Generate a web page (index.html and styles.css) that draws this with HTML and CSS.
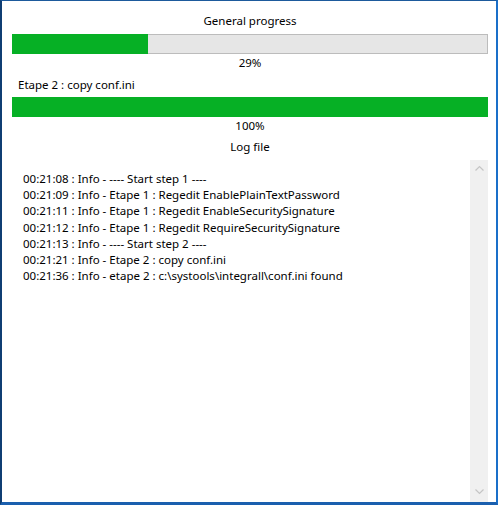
FILE: index.html
```html
<!DOCTYPE html>
<html lang="en">
<head>
  <meta charset="UTF-8">
  <title>Progress</title>
  <link rel="stylesheet" href="styles.css">
</head>
<body>
  <div class="window">
    <div class="caption caption-top">General progress</div>
    <div class="progress">
      <div class="progress-fill" style="width: 28.6%"></div>
    </div>
    <div class="caption">29%</div>

    <div class="step-label">Etape 2 : copy conf.ini</div>
    <div class="progress">
      <div class="progress-fill" style="width: 100%"></div>
    </div>
    <div class="caption">100%</div>

    <div class="caption caption-log">Log file</div>
    <div class="log-box">
      <div class="log-lines">
        <div>00:21:08 : Info - ---- Start step 1 ----</div>
        <div>00:21:09 : Info - Etape 1 : Regedit EnablePlainTextPassword</div>
        <div>00:21:11 : Info - Etape 1 : Regedit EnableSecuritySignature</div>
        <div>00:21:12 : Info - Etape 1 : Regedit RequireSecuritySignature</div>
        <div>00:21:13 : Info - ---- Start step 2 ----</div>
        <div>00:21:21 : Info - Etape 2 : copy conf.ini</div>
        <div>00:21:36 : Info - etape 2 : c:\systools\integrall\conf.ini found</div>
      </div>
      <div class="scrollbar">
        <svg class="arrow" width="17" height="17" viewBox="0 0 17 17">
          <path d="M4.5 10.5 L8.5 6.5 L12.5 10.5" fill="none" stroke="#c5c5c5" stroke-width="1.2"/>
        </svg>
        <svg class="arrow" width="17" height="17" viewBox="0 0 17 17">
          <path d="M4.5 6.5 L8.5 10.5 L12.5 6.5" fill="none" stroke="#c5c5c5" stroke-width="1.2"/>
        </svg>
      </div>
    </div>
  </div>
</body>
</html>
```

FILE: styles.css
```css
* {
  box-sizing: border-box;
}

html, body {
  margin: 0;
  padding: 0;
  background-color: #ffffff;
}

body {
  width: 500px;
  height: 505px;
  overflow: hidden;
  font-family: "Noto Sans", "Open Sans", sans-serif;
  font-size: 11.5px;
  color: #000000;
}

.window {
  display: flex;
  flex-direction: column;
  width: 498px;
  height: 505px;
  padding: 0 8px 0 10px;
  border-top: 1px solid #1d5a9c;
  border-left: 2px solid #0f3e73;
  border-right: 2px solid #1a6fc9;
  border-bottom: 3px solid #1a5fae;
  background-color: #ffffff;
}

.caption {
  height: 16px;
  line-height: 16px;
  text-align: center;
  flex-shrink: 0;
}

.caption-top {
  margin-top: 12px;
  margin-bottom: 5px;
}

.caption-log {
  margin-top: 5px;
}

.step-label {
  height: 16px;
  line-height: 16px;
  margin-top: 6px;
  margin-bottom: 4px;
  padding-left: 6px;
  flex-shrink: 0;
}

/* border drawn as an inset shadow so the green fill covers it */
.progress {
  height: 20px;
  flex-shrink: 0;
  margin-bottom: 1px;
  background-color: #e6e6e6;
  box-shadow: inset 0 0 0 1px #bcbcbc;
}

.progress-fill {
  height: 100%;
  background-color: #06b025;
}

.log-box {
  display: flex;
  flex: 1;
  margin-top: 5px;
  min-height: 0;
}

.log-lines {
  flex: 1;
  padding: 11px 0 0 11px;
  line-height: 16.2px;
  white-space: nowrap;
}

.scrollbar {
  display: flex;
  flex-direction: column;
  justify-content: space-between;
  width: 18px;
  background-color: #f0f0f0;
  padding-bottom: 2px;
}

.arrow {
  display: block;
  margin-left: 1px;
}
```
